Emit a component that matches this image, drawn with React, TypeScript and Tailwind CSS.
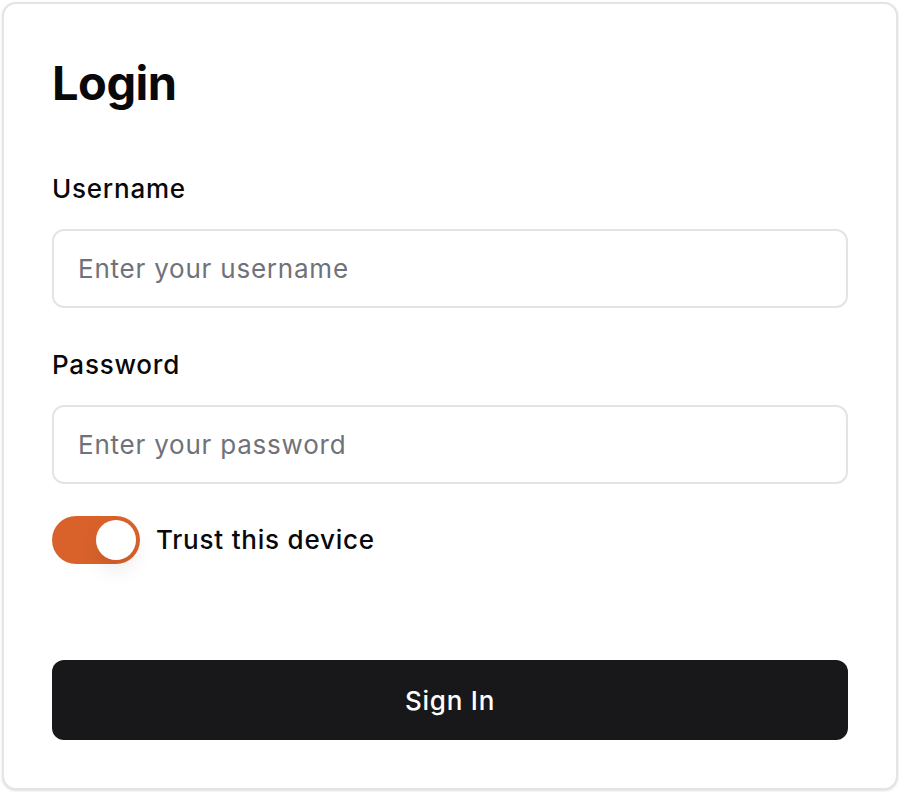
import { useState } from 'react';

const App = () => {
    const [trusted, setTrusted] = useState(true);

    return (
        <div className="p-[2px] bg-white" style={{ fontFamily: 'Inter, "Noto Sans", sans-serif' }}>
            <div className="border-2 border-[#e4e4e7] rounded-[14px] bg-white shadow-sm p-[48px] text-[#09090b]">
                <h1 className="text-[47px] leading-[61px] font-bold tracking-[-0.5px]">Login</h1>

                {/* Username */}
                <div className="mt-[60px]">
                    <label className="block text-[26px] leading-[32px] font-medium tracking-[0.03em]">Username</label>
                    <input
                        className="mt-[24px] w-full h-[79px] border-2 border-[#e4e4e7] rounded-[12px] px-[24px] text-[26px] tracking-[0.03em] placeholder:text-[#71717a] outline-none"
                        placeholder="Enter your username"
                    />
                </div>

                {/* Password */}
                <div className="mt-[41px]">
                    <label className="block text-[26px] leading-[32px] font-medium tracking-[0.03em]">Password</label>
                    <input
                        type="password"
                        className="mt-[24px] w-full h-[79px] border-2 border-[#e4e4e7] rounded-[12px] px-[24px] text-[26px] tracking-[0.03em] placeholder:text-[#71717a] outline-none"
                        placeholder="Enter your password"
                    />
                </div>

                {/* Trust toggle */}
                <div className="mt-[32px] flex items-center gap-[16px]">
                    <button
                        onClick={() => setTrusted(!trusted)}
                        className={`w-[88px] h-[48px] rounded-full p-[4px] flex items-center ${trusted ? 'bg-[#d9622b] justify-end' : 'bg-[#e4e4e7] justify-start'}`}
                    >
                        <span className="block w-[40px] h-[40px] rounded-full bg-white shadow-[0_10px_20px_rgba(0,0,0,0.08)]" />
                    </button>
                    <span className="text-[26px] leading-[32px] font-medium tracking-[0.03em]">Trust this device</span>
                </div>

                <button className="mt-[96px] w-full h-[80px] rounded-[12px] bg-[#18181b] text-white text-[26px] font-medium tracking-[0.03em]">
                    Sign In
                </button>
            </div>
        </div>
    );
};

export default App;
